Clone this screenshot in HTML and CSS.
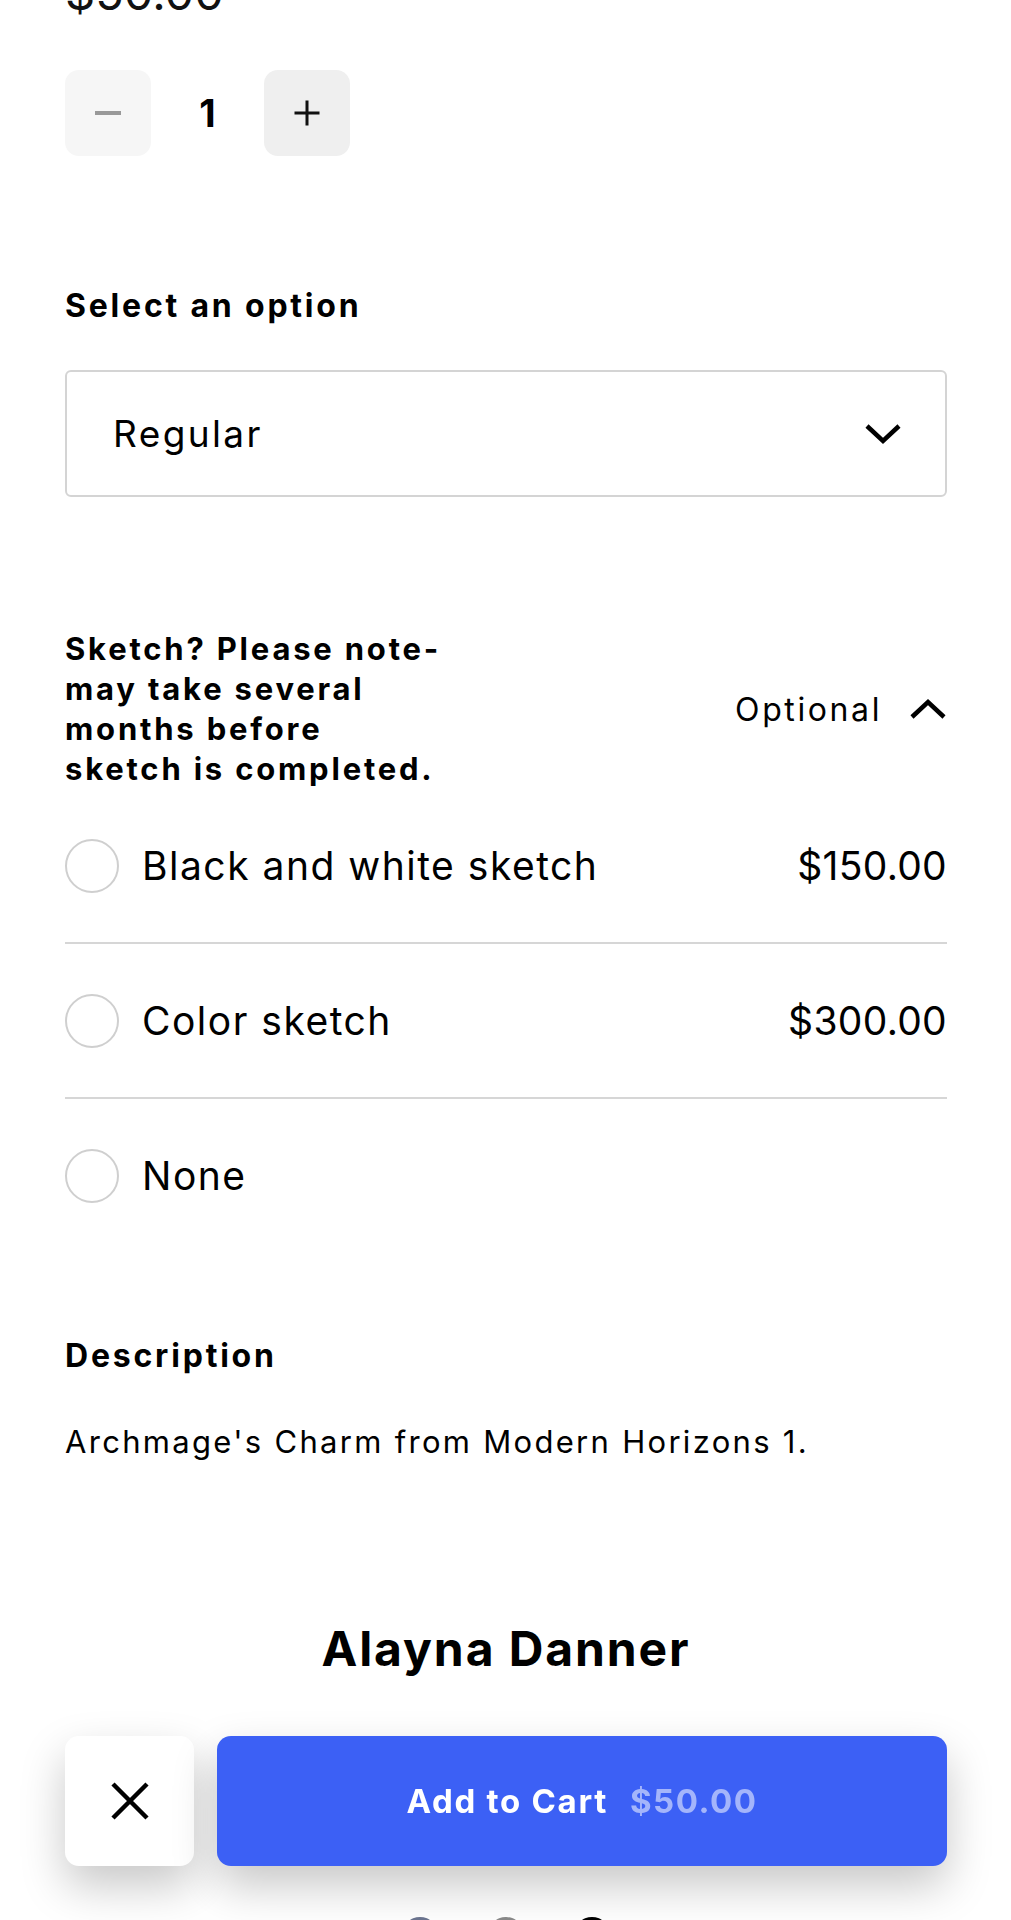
FILE: index.html
```html
<!DOCTYPE html>
<html lang="en">
<head>
<meta charset="utf-8">
<title>Archmage's Charm</title>
<link rel="stylesheet" href="styles.css">
</head>
<body>
<main class="page">
  <div class="price">$50.00</div>

  <div class="qty">
    <button class="qty-btn qty-minus" aria-label="Decrease"><span class="minus-bar"></span></button>
    <span class="qty-value">1</span>
    <button class="qty-btn qty-plus" aria-label="Increase">
      <svg width="28" height="28" viewBox="0 0 28 28"><path d="M14 1.5V26.5M1.5 14H26.5" stroke="#111" stroke-width="3" fill="none"/></svg>
    </button>
  </div>

  <div class="field-label">Select an option</div>
  <div class="select">
    <span class="select-value">Regular</span>
    <svg class="chev" width="38" height="22" viewBox="0 0 38 22"><polyline points="3,3 19,18 35,3" fill="none" stroke="#000" stroke-width="4.5"/></svg>
  </div>

  <section class="addon">
    <div class="addon-head">
      <h3 class="addon-title">Sketch? Please note-<br>may take several<br>months before<br>sketch is completed.</h3>
      <div class="addon-toggle">
        <span>Optional</span>
        <svg width="38" height="22" viewBox="0 0 38 22"><polyline points="3,19 19,4 35,19" fill="none" stroke="#000" stroke-width="4.5"/></svg>
      </div>
    </div>
    <ul class="choices">
      <li class="choice"><span class="radio"></span><span class="choice-name">Black and white sketch</span><span class="choice-price">$150.00</span></li>
      <li class="choice"><span class="radio"></span><span class="choice-name">Color sketch</span><span class="choice-price">$300.00</span></li>
      <li class="choice"><span class="radio"></span><span class="choice-name">None</span></li>
    </ul>
  </section>

  <h4 class="desc-title">Description</h4>
  <p class="desc">Archmage's Charm from Modern Horizons 1.</p>

  <h2 class="artist">Alayna Danner</h2>

  <div class="dots">
    <span class="dot dot-a"></span>
    <span class="dot dot-b"></span>
    <span class="dot dot-c"></span>
  </div>
</main>

<div class="sticky-bar">
  <button class="close-btn" aria-label="Close">
    <svg width="40" height="38" viewBox="0 0 40 38"><path d="M3 2L37 36M37 2L3 36" stroke="#000" stroke-width="4.5" fill="none"/></svg>
  </button>
  <button class="cart-btn"><span class="cart-label">Add to Cart</span><span class="cart-price">$50.00</span></button>
</div>
</body>
</html>
```

FILE: styles.css
```css
* { box-sizing: border-box; }
html, body { margin: 0; padding: 0; background: #fff; }
body {
  font-family: Inter, "Liberation Sans", sans-serif;
  color: #000;
  overflow: hidden;
  height: 1920px;
}
.page {
  padding: 0 64px 0 65px;
}
.price {
  font-size: 47px;
  line-height: 58px;
  margin-top: -36px;
  color: #111;
}
.qty {
  display: flex;
  align-items: center;
  margin-top: 48px;
  height: 86px;
}
.qty-btn {
  width: 86px;
  height: 86px;
  border: 0;
  border-radius: 14px;
  display: flex;
  align-items: center;
  justify-content: center;
  padding: 0;
}
.qty-minus { background: #f6f6f6; }
.qty-plus { background: #efefef; }
.minus-bar { width: 26px; height: 4px; background: #999; }
.qty-value {
  width: 113px;
  text-align: center;
  font-size: 38px;
  font-weight: 700;
}
.field-label {
  margin-top: 130px;
  font-size: 32px;
  line-height: 40px;
  font-weight: 700;
  letter-spacing: 2.8px;
}
.select {
  margin-top: 44px;
  height: 127px;
  border: 2px solid #d4d4d4;
  border-radius: 6px;
  display: flex;
  align-items: center;
  justify-content: space-between;
  padding: 0 43px 0 46px;
}
.select-value { font-size: 37px; letter-spacing: 2.4px; }
.addon { margin-top: 132px; }
.addon-head {
  display: flex;
  align-items: center;
  justify-content: space-between;
}
.addon-title {
  margin: 0;
  font-size: 31px;
  line-height: 40px;
  font-weight: 700;
  letter-spacing: 2.8px;
}
.addon-toggle {
  display: flex;
  align-items: center;
  gap: 27px;
  font-size: 32px;
  letter-spacing: 2.6px;
}
.choices { list-style: none; margin: 0; padding: 0; }
.choice {
  display: flex;
  align-items: center;
  height: 155px;
  border-bottom: 2px solid #d6d6d6;
}
.choice:last-child { border-bottom: 0; height: 153px; }
.radio {
  width: 54px;
  height: 54px;
  border: 2px solid #cfcfcf;
  border-radius: 50%;
  flex: none;
}
.choice-name {
  margin-left: 23px;
  font-size: 39px;
  letter-spacing: 1.5px;
  flex: 1;
}
.choice-price { font-size: 39px; letter-spacing: 0.3px; }
.desc-title {
  margin: 84px 0 0;
  font-size: 32px;
  line-height: 40px;
  font-weight: 700;
  letter-spacing: 2.8px;
}
.desc {
  margin: 46px 0 0;
  font-size: 31px;
  line-height: 40px;
  letter-spacing: 2.3px;
}
.artist {
  margin: 157px 0 0;
  text-align: center;
  font-size: 48px;
  line-height: 60px;
  font-weight: 700;
  letter-spacing: 1.9px;
}
.dots {
  margin-top: 238px;
  display: flex;
  justify-content: center;
  gap: 50px;
}
.dot { width: 36px; height: 36px; border-radius: 50%; }
.dot-a { background: #6c7590; }
.dot-b { background: #8a8a8a; }
.dot-c { background: #000; }
.sticky-bar {
  position: fixed;
  left: 65px;
  right: 64px;
  bottom: 54px;
  height: 130px;
  display: flex;
  gap: 23px;
}
.close-btn {
  width: 129px;
  height: 130px;
  flex: none;
  border: 0;
  border-radius: 14px;
  background: #fff;
  display: flex;
  align-items: center;
  justify-content: center;
  box-shadow: 0 20px 45px rgba(0,0,0,0.22);
}
.cart-btn {
  flex: 1;
  border: 0;
  border-radius: 14px;
  background: #3c60f5;
  display: flex;
  align-items: center;
  justify-content: center;
  gap: 22px;
  font-family: Inter, "Liberation Sans", sans-serif;
  font-size: 33px;
  font-weight: 700;
  letter-spacing: 1.7px;
  box-shadow: 0 20px 45px rgba(0,0,0,0.22);
}
.cart-label { color: #fff; }
.cart-price { color: #a4b5fb; letter-spacing: 1.5px; }
```
